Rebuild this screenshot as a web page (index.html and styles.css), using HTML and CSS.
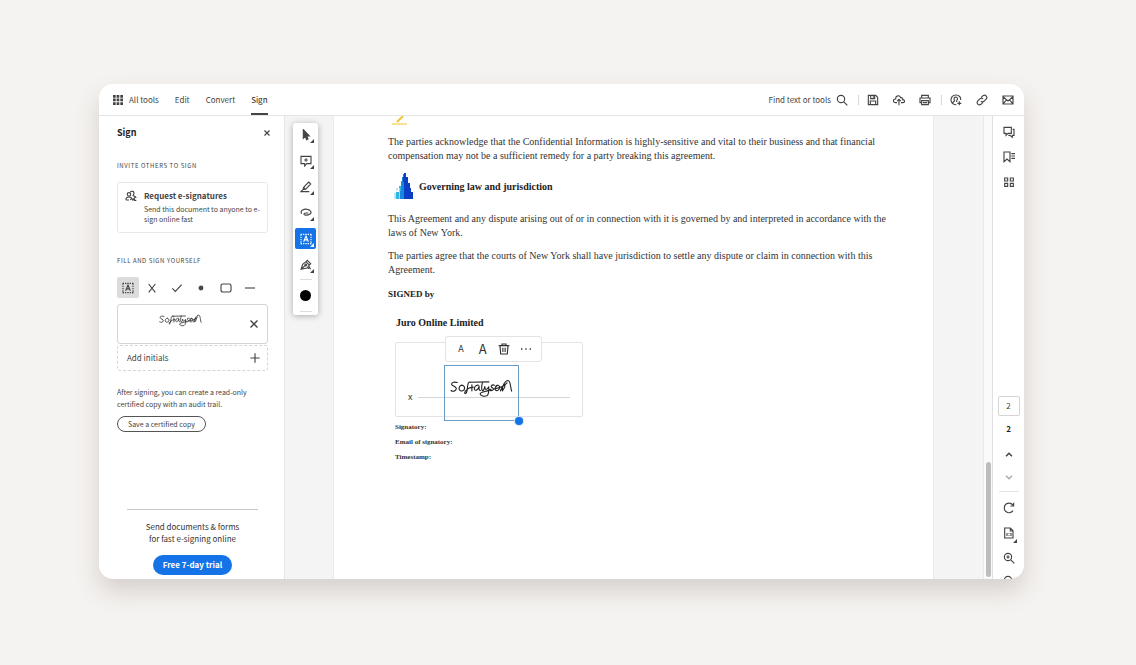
FILE: index.html
```html
<!DOCTYPE html>
<html lang="en">
<head>
    <meta charset="UTF-8">
    <meta name="viewport" content="width=device-width, initial-scale=1.0">
    <title>Sign</title>
    <link rel="stylesheet" href="styles.css">
</head>
<body>
    <!-- shared drawings -->
    <svg class="defs" width="0" height="0" aria-hidden="true">
        <symbol id="signature" viewBox="0 0 190 56">
            <path d="M22 10C14 7 4 9 5 16C8 22 20 22 19 29C17 37 8 38 3 34M37 18C29 18 25 27 29 33C34 38 44 35 44 27C44 22 41 19 37 18M64 9C56 6 54 12 53 22C52 34 50 45 45 43C42 38 52 29 60 26L70 24M66 17L66 35M86 18C77 16 72 26 74 31C77 37 86 31 88 21C87 29 88 35 92 34M98 8C96 17 94 29 97 33C99 37 103 32 105 22C105 31 109 36 117 23C117 34 118 47 111 50C103 53 92 50 91 44C91 38 108 39 124 30M60 9L117 8M134 18C126 15 121 22 127 25C135 29 130 36 121 34M144 18C136 18 134 30 139 34C146 36 151 28 149 22C147 17 142 16 138 24M152 35C157 28 158 17 165 16C168 20 161 32 158 35C156 22 166 4 175 4C183 5 181 20 186 36M132 30C146 26 160 25 172 11"/>
        </symbol>
        <symbol id="text-field" viewBox="0 0 18 18">
            <path d="M1 2H17M1 16H17" stroke-dasharray="2 1.5"/>
            <path d="M1.5 2V17M16.5 2V17" stroke-dasharray="2 1.5"/>
            <path d="M5.5 13L9 4.5L12.5 13M6.8 10.4H11.2"/>
        </symbol>
    </svg>

    <main class="window">
        <header class="topbar">
            <nav class="tabs">
                <a href="#" class="tab">
                    <svg class="grid-icon" viewBox="0 0 10 10"><path d="M0 0H2.7V2.7H0ZM3.6 0H6.3V2.7H3.6ZM7.3 0H10V2.7H7.3ZM0 3.6H2.7V6.3H0ZM3.6 3.6H6.3V6.3H3.6ZM7.3 3.6H10V6.3H7.3ZM0 7.3H2.7V10H0ZM3.6 7.3H6.3V10H3.6ZM7.3 7.3H10V10H7.3Z"/></svg>
                    All tools
                </a>
                <a href="#" class="tab">Edit</a>
                <a href="#" class="tab">Convert</a>
                <a href="#" class="tab active">Sign</a>
            </nav>
            <div class="actions">
                <button class="find">Find text or tools
                    <svg class="icon" viewBox="0 0 18 18"><circle cx="7.5" cy="7.5" r="5.5"/><path d="M11.7 11.7L17 17"/></svg>
                </button>
                <span class="sep"></span>
                <button class="action" aria-label="Save"><svg class="icon" viewBox="0 0 18 18"><path d="M2 2H13L16 5V16H2ZM5.5 2V7H11.5V2M9.5 3.5V5.5M5 16V10.5H13V16"/></svg></button>
                <button class="action" aria-label="Upload"><svg class="icon" viewBox="0 0 18 18"><path d="M6 13H4C-.5 13 -.5 7.5 4 7.5C3.5 2 10 1 11.5 5.5C14.5 5 15 8 14.5 8.5C18.5 9 18 13 14.5 13H12M9 17V8M6.2 10.8L9 8L11.8 10.8"/></svg></button>
                <button class="action" aria-label="Print"><svg class="icon" viewBox="0 0 18 18"><path d="M4 6V2H14V6M4 13H1.5V6H16.5V13H14M4 10H14V16H4ZM6 13H12"/></svg></button>
                <span class="sep"></span>
                <button class="action" aria-label="Share with people"><svg class="icon" viewBox="0 0 18 18"><path d="M9.5 16C-1 17 -1 1.5 8.5 1.5C14 1.5 16.5 5 16 9M4 14C4.5 11 7 11 7 10C4.5 6 7 4.5 9 4.5C12 5 11.5 8 10 10L10 12M14 11V17M11 14H17"/></svg></button>
                <button class="action" aria-label="Copy link"><svg class="icon" viewBox="0 0 18 18"><path d="M7.5 5.5L10.5 2.5C13.5 0 18 4 15.5 7.5L12 11C10.5 12 8.5 12 7.5 10.5M10.5 12.5L7.5 15.5C4 18 0 14 2.5 10.5L6 7C7.5 6 9.5 6 10.5 7.5"/></svg></button>
                <button class="action" aria-label="Email"><svg class="icon" viewBox="0 0 18 18"><path d="M1.5 3H16.5V15H1.5ZM2 4.5L9 10.5L16 4.5M2 14.5L6.5 9M16 14.5L11.5 9"/></svg></button>
            </div>
        </header>

        <div class="workspace">
            <aside class="sidebar">
                <div class="sidebar-head">
                    <h1>Sign</h1>
                    <button class="close" aria-label="Close"><svg viewBox="0 0 8 8"><path d="M1.5 1.5L6.5 6.5M6.5 1.5L1.5 6.5"/></svg></button>
                </div>

                <h2 class="invite">Invite others to sign</h2>
                <button class="request">
                    <svg class="icon" viewBox="0 0 18 18"><circle cx="6" cy="6.5" r="2.6"/><path d="M8 3.5C9 1 14 1.5 13.5 5C13.5 6.5 12 8 12 8.5C14 9 16.5 9.5 16.5 12M1.5 15C1 11 4 10.5 6 10.5C8 10.5 9 11 9.5 12M1.5 15H6M8 15L10 12.5L11.5 15L14 12V15.5H17"/></svg>
                    <span>
                        <strong>Request e-signatures</strong>
                        <small>Send this document to anyone to e-sign online fast</small>
                    </span>
                </button>

                <h2 class="fill">Fill and sign yourself</h2>
                <div class="marks">
                    <button class="mark selected" aria-label="Text"><svg class="icon"><use href="#text-field"/></svg></button>
                    <button class="mark" aria-label="Cross"><svg class="icon" viewBox="0 0 18 18"><path d="M4 3L14 15.5M14 3L4 15.5"/></svg></button>
                    <button class="mark" aria-label="Check"><svg class="icon" viewBox="0 0 18 18"><path d="M2 9.5L6.5 14L16 4"/></svg></button>
                    <button class="mark" aria-label="Dot"><svg class="icon" viewBox="0 0 18 18"><circle class="solid" cx="9" cy="9" r="2.8"/></svg></button>
                    <button class="mark" aria-label="Box"><svg class="icon" viewBox="0 0 18 18"><rect x="1.5" y="3" width="15" height="12" rx="2.5"/></svg></button>
                    <button class="mark" aria-label="Line"><svg class="icon" viewBox="0 0 18 18"><path d="M1.5 9H16.5"/></svg></button>
                </div>
                <div class="saved-signature">
                    <svg class="signature small"><use href="#signature"/></svg>
                    <button class="close" aria-label="Remove signature"><svg viewBox="0 0 8 8"><path d="M.5 .5L7.5 7.5M7.5 .5L.5 7.5"/></svg></button>
                </div>
                <button class="initials">Add initials
                    <svg class="icon" viewBox="0 0 18 18"><path d="M9 2V16M2 9H16"/></svg>
                </button>

                <p class="note">After signing, you can create a read-only certified copy with an audit trail.</p>
                <button class="certify">Save a certified copy</button>

                <div class="promo">
                    <p>Send documents &amp; forms<br>for fast e-signing online</p>
                    <button class="trial">Free 7-day trial</button>
                </div>
            </aside>

            <section class="viewer">
                <div class="tools">
                    <button class="tool" aria-label="Select"><svg class="icon" viewBox="0 0 18 18"><path class="solid" d="M5 1V14L8 11.3L10 16L12 15L10 10.5H14Z"/></svg></button>
                    <button class="tool" aria-label="Comment"><svg class="icon" viewBox="0 0 18 18"><path d="M1.5 2H16.5V13H10L7 16.5V13H1.5ZM9 4.8V10.2M6.3 7.5H11.7"/></svg></button>
                    <button class="tool" aria-label="Highlight"><svg class="icon" viewBox="0 0 18 18"><path d="M13 1.5L16 4.5L8.5 12.5L4.5 13L5.5 9.5ZM5.5 9.5L8.5 12.5M4.5 13L1.5 16H14"/></svg></button>
                    <button class="tool" aria-label="Draw"><svg class="icon" viewBox="0 0 18 18"><path d="M2.5 10C-1 5 7 2.5 11 3.5C17 4.5 18 9 14.5 11C11 13 5 12.5 6 10C6.5 8.5 9 9 12.5 9"/></svg></button>
                    <button class="tool current" aria-label="Add text"><svg class="icon"><use href="#text-field"/></svg></button>
                    <button class="tool" aria-label="Sign"><svg class="icon" viewBox="0 0 18 18"><path d="M1.5 15.5L4 8L9 4L14 9L10.5 13.5ZM2 15L8 9.5M9 4L11 2L16 7L14 9M12 15L14 12L16 15.5"/><circle cx="8.7" cy="9" r="1.3"/></svg></button>
                    <span class="rule"></span>
                    <button class="color" aria-label="Colour"></button>
                    <span class="rule"></span>
                </div>

                <article class="page">
                    <svg class="pen" viewBox="0 0 18 9"><path d="M6 6L12 0" stroke-width="2"/><path d="M1 8H16"/></svg>
                    <p>The parties acknowledge that the Confidential Information is highly-sensitive and vital to their business and that financial compensation may not be a sufficient remedy for a party breaking this agreement.</p>
                    <h3 class="law">
                        <svg viewBox="0 0 20 27">
                            <path fill="#bdeaf5" d="M0 20H2V26H0ZM2 15H4V18H2Z"/>
                            <path fill="#2fb4e8" d="M2 19H5V13H7V8H9V26H2Z"/>
                            <path fill="#1687dc" d="M7 9H8V4H9V1H11V26H6V18H7Z"/>
                            <path fill="#0a3ec4" d="M9 4H10V0H12V4H14V10H16V15H17V19H19V26H10V9H9Z"/>
                            <path fill="#8adff2" d="M5 15H6V26H5Z"/>
                        </svg>
                        Governing law and jurisdiction
                    </h3>
                    <p class="governed">This Agreement and any dispute arising out of or in connection with it is governed by and interpreted in accordance with the laws of New York.</p>
                    <p class="courts">The parties agree that the courts of New York shall have jurisdiction to settle any dispute or claim in connection with this Agreement.</p>
                    <h3 class="signed">SIGNED by</h3>

                    <div class="signer">
                        <h4>Juro Online Limited</h4>
                        <div class="sign-box">
                            <span class="cross">x</span>
                            <span class="line"></span>
                            <div class="selection">
                                <svg class="signature"><use href="#signature"/></svg>
                                <span class="handle"></span>
                            </div>
                            <div class="popup">
                                <button class="smaller" aria-label="Smaller">A</button>
                                <button class="larger" aria-label="Larger">A</button>
                                <button aria-label="Delete"><svg class="icon" viewBox="0 0 18 18"><path d="M1 4H17M6 4V1.5H12V4M3 4L4 16.5H14L15 4M7.3 7V13.5M10.7 7V13.5"/></svg></button>
                                <button aria-label="More"><svg class="icon" viewBox="0 0 18 18"><path class="dots" d="M1.5 8h2v2h-2zM8 8h2v2h-2zM14.5 8h2v2h-2z"/></svg></button>
                            </div>
                        </div>
                        <ul>
                            <li>Signatory:</li>
                            <li>Email of signatory:</li>
                            <li>Timestamp:</li>
                        </ul>
                    </div>
                </article>
            </section>

            <div class="scrollbar"><span class="thumb"></span></div>

            <aside class="rail">
                <button class="rail-button" aria-label="Comments"><svg class="icon" viewBox="0 0 18 18"><path d="M1.5 2H12.5V11H7.5L4.5 14V11H1.5ZM14.5 5H16.5V14H14V17L10.5 14H8"/></svg></button>
                <button class="rail-button" aria-label="Bookmarks"><svg class="icon" viewBox="0 0 18 18"><path d="M1.5 1.5H10.5V16L6 12L1.5 16ZM12.5 4H18M12.5 7.5H18M12.5 11H18"/></svg></button>
                <button class="rail-button" aria-label="Pages"><svg class="icon" viewBox="0 0 18 18"><path d="M2.5 3H7V7.5H2.5ZM11 3H15.5V7.5H11ZM2.5 11H7V15.5H2.5ZM11 11H15.5V15.5H11Z"/></svg></button>
                <div class="pager">
                    <input type="text" value="2" aria-label="Page number">
                    <span class="total">2</span>
                    <button class="step" aria-label="Previous page"><svg class="icon" viewBox="0 0 18 18"><path class="heavy" d="M4.5 11L9 6.5L13.5 11"/></svg></button>
                    <button class="step disabled" aria-label="Next page"><svg class="icon" viewBox="0 0 18 18"><path class="heavy" d="M4.5 7L9 11.5L13.5 7"/></svg></button>
                    <span class="rule"></span>
                    <button class="rail-button" aria-label="Rotate"><svg class="icon" viewBox="0 0 18 18"><path d="M15 4.5C10 -1 2 2 2 9C2 16 11 18.5 15 13M16 1V6H11"/></svg></button>
                    <button class="rail-button corner" aria-label="Page display"><svg class="icon" viewBox="0 0 18 18"><path d="M2.5 1.5H11L15 5.5V16.5H2.5ZM11 1.5V6H15M6 9V13.5M12 9V13.5M9 9.5V10.5M9 12V13"/></svg></button>
                    <button class="rail-button" aria-label="Zoom in"><svg class="icon" viewBox="0 0 18 18"><circle cx="7.5" cy="7.5" r="5.5"/><path d="M11.7 11.7L17 17M7.5 5V10M5 7.5H10"/></svg></button>
                    <button class="rail-button last" aria-label="Zoom out"><svg class="icon" viewBox="0 0 18 18"><circle cx="7.5" cy="7.5" r="5.5"/><path d="M11.7 11.7L17 17M5 7.5H10"/></svg></button>
                </div>
            </aside>
        </div>
    </main>
</body>
</html>
```
FILE: styles.css
```css
* {
    box-sizing: border-box;
}
body {
    display: flex;
    height: 100vh;
    margin: 0;
    padding: 84px 112px 86px 99px;
    background-color: #f5f3f1;
    color: #444;
    font-family: "Noto Sans CJK SC", "Noto Sans", sans-serif;
    font-size: 8px;
    line-height: 12px;
}
h1, h2, h3, h4, p, ul {
    margin: 0;
    padding: 0;
}
button {
    padding: 0;
    border: none;
    background: none;
    color: inherit;
    font: inherit;
    cursor: pointer;
}
svg {
    display: block;
    fill: none;
    stroke: currentColor;
}
.defs {
    position: absolute;
}
.icon {
    width: 12px;
    height: 12px;
    flex: none;
    stroke-width: 1.7;
}
.solid {
    fill: currentColor;
}
.dots {
    fill: currentColor;
    stroke: none;
}
.heavy {
    stroke-width: 2.2;
}
.window {
    flex: 1;
    min-width: 0;
    display: flex;
    flex-direction: column;
    overflow: hidden;
    border-radius: 14px;
    background-color: #fff;
    box-shadow: 0 12px 24px rgba(90, 70, 55, 0.2);
}

/* top bar */
.topbar {
    display: flex;
    justify-content: space-between;
    height: 32px;
    flex: none;
    padding: 0 10px 0 14px;
    border-bottom: 1px solid #e6e6e6;
}
.tabs, .actions {
    display: flex;
    align-items: center;
}
.tabs {
    gap: 16px;
}
.tab {
    display: flex;
    align-items: center;
    gap: 6px;
    height: 31px;
    padding-top: 2px;
    border-bottom: 2px solid transparent;
    color: #444;
    text-decoration: none;
}
.tab.active {
    border-color: #444;
    color: #222;
}
.grid-icon {
    width: 10px;
    height: 10px;
    fill: #444;
    stroke: none;
}
.find {
    display: flex;
    align-items: center;
    gap: 5px;
}
.action {
    display: grid;
    place-items: center;
    width: 12px;
    height: 24px;
    margin-left: 14px;
}
.sep {
    width: 1px;
    height: 10px;
    margin-left: 10px;
    background-color: #d8d8d8;
}
.sep + .action {
    margin-left: 8px;
}

.workspace {
    flex: 1;
    min-height: 0;
    display: flex;
}

/* left panel */
.sidebar {
    display: flex;
    flex-direction: column;
    width: 186px;
    flex: none;
    padding: 10px 16px 4px 18px;
    border-right: 1px solid #e4e4e4;
}
.sidebar-head {
    display: flex;
    justify-content: space-between;
    align-items: center;
    height: 14px;
    margin-right: -3px;
}
.sidebar h1 {
    color: #222;
    font-size: 9px;
    line-height: 14px;
}
.close svg {
    width: 8px;
    height: 8px;
    stroke-width: 1.2;
}
.sidebar h2 {
    font-size: 6px;
    font-weight: 400;
    line-height: 10px;
    letter-spacing: 0.1em;
    text-transform: uppercase;
}
.invite {
    margin-top: 21px;
}
.request {
    display: flex;
    gap: 7px;
    margin-top: 11px;
    padding: 7px;
    border: 1px solid #e8e8e8;
    border-radius: 3px;
    text-align: left;
}
.request strong, .request small {
    display: block;
}
.request strong {
    line-height: 12px;
}
.request small {
    margin-top: 2px;
    padding-bottom: 1px;
    font-size: 7px;
    line-height: 10px;
}
.fill {
    margin-top: 23px;
}
.marks {
    display: flex;
    justify-content: space-between;
    margin-top: 11px;
    padding-right: 7px;
}
.mark {
    display: grid;
    place-items: center;
    width: 22px;
    height: 21px;
    border-radius: 2px;
}
.mark.selected {
    background-color: #dcdcdc;
}
.saved-signature {
    display: flex;
    justify-content: space-between;
    align-items: center;
    height: 40px;
    margin-top: 6px;
    padding: 0 9px 0 41px;
    border: 1px solid #d5d5d5;
    border-radius: 3px;
}
.saved-signature .close svg {
    stroke-width: 1.4;
}
.signature {
    width: 63px;
    height: 19px;
    color: #222;
    stroke-width: 3.4;
    stroke-linecap: round;
    stroke-linejoin: round;
}
.signature.small {
    width: 43px;
    height: 13px;
    margin-bottom: 8px;
}
.initials {
    display: flex;
    justify-content: space-between;
    align-items: center;
    height: 26px;
    margin-top: 1px;
    padding: 0 6px 0 9px;
    border: 1px dashed #d5d5d5;
    border-radius: 3px;
}
.note {
    margin-top: 15px;
    font-size: 7px;
}
.certify {
    align-self: flex-start;
    height: 16px;
    margin-top: 6px;
    padding: 0 10px;
    border: 1px solid #555;
    border-radius: 8px;
    font-size: 7px;
    line-height: 12px;
}
.promo {
    display: flex;
    flex-direction: column;
    align-items: center;
    gap: 10px;
    margin: auto 10px 0;
    padding-top: 11px;
    border-top: 1px solid #c8c8c8;
    color: #333;
    text-align: center;
}
.trial {
    height: 20px;
    padding: 0 10px;
    border-radius: 10px;
    background-color: #1473e6;
    color: #fff;
    font-weight: 700;
}

/* document */
.viewer {
    flex: 1;
    min-width: 0;
    display: flex;
    align-items: flex-start;
    padding: 0 50px 0 8px;
    overflow: hidden;
    background-color: #f4f4f4;
}
.tools {
    display: flex;
    flex-direction: column;
    align-items: center;
    width: 25px;
    flex: none;
    margin: 7px 16px 0 0;
    padding-bottom: 3px;
    border-radius: 3px;
    background-color: #fff;
    box-shadow: 0 1px 6px rgba(0, 0, 0, 0.3);
}
.tool {
    position: relative;
    display: grid;
    place-items: center;
    width: 21px;
    height: 21px;
    margin-top: 5px;
    border-radius: 2px;
}
.tool:first-child {
    margin-top: 1px;
}
.tool.current {
    background-color: #1473e6;
    color: #fff;
}
.tool::after, .corner::after {
    content: "";
    position: absolute;
    right: 2px;
    bottom: 2px;
    border: 2px solid transparent;
    border-right-color: currentColor;
    border-bottom-color: currentColor;
}
.tools .rule {
    width: 12px;
    height: 1px;
    margin-top: 4px;
    background-color: #ddd;
}
.color {
    width: 11px;
    height: 11px;
    margin-top: 10px;
    border-radius: 50%;
    background-color: #000;
}
.color + .rule {
    margin-top: 10px;
}
.page {
    flex: 1;
    min-width: 0;
    align-self: stretch;
    padding: 0 35px 0 54px;
    background-color: #fff;
    outline: 1px solid #ebebeb;
    color: #333;
    font-family: "Liberation Serif", serif;
    font-size: 10px;
    line-height: 14px;
}
.pen {
    width: 18px;
    height: 9px;
    margin: 0 0 10px 3px;
    color: #f4c430;
}
.page h3, .page h4 {
    color: #222;
    font-size: 10px;
    line-height: 14px;
}
.law {
    display: flex;
    align-items: center;
    gap: 5px;
    margin: 10px 0 12px 6px;
}
.law svg {
    width: 20px;
    height: 27px;
    stroke: none;
}
.courts {
    margin-top: 9px;
}
.page .signed {
    margin-top: 10px;
    font-size: 9px;
}
.signer {
    margin: 15px 0 0 7px;
}
.signer h4 {
    margin-left: 1px;
}
.sign-box {
    position: relative;
    display: flex;
    align-items: center;
    gap: 6px;
    width: 188px;
    height: 75px;
    margin-top: 12px;
    padding: 35px 12px 0;
    border: 1px solid #e3e3e3;
    border-radius: 2px;
}
.cross {
    font-family: "Noto Sans CJK SC", sans-serif;
    font-size: 9px;
}
.line {
    flex: 1;
    height: 1px;
    background-color: #cfd6dc;
}
.selection {
    position: absolute;
    left: 48px;
    top: 22px;
    width: 75px;
    height: 56px;
    padding: 13px 5px;
    border: 1px solid #6a9bc9;
}
.handle {
    position: absolute;
    right: -5px;
    bottom: -5px;
    width: 8px;
    height: 8px;
    border-radius: 50%;
    background-color: #1473e6;
    box-shadow: 0 0 0 1px #cfe1f7;
}
.popup {
    position: absolute;
    left: 49px;
    top: -7px;
    display: flex;
    align-items: center;
    justify-content: space-around;
    width: 97px;
    height: 26px;
    padding: 0 4px;
    border: 1px solid #e3e3e3;
    border-radius: 3px;
    background-color: #fff;
    font-family: "Noto Sans CJK SC", sans-serif;
}
.popup button {
    width: 12px;
}
.popup .smaller {
    font-size: 9px;
}
.popup .larger {
    font-size: 13px;
}
.signer ul {
    margin-top: 3px;
    font-size: 7px;
    font-weight: 700;
    line-height: 15px;
    list-style: none;
}

/* scrollbar and right rail */
.scrollbar {
    display: flex;
    align-items: flex-end;
    justify-content: center;
    width: 10px;
    flex: none;
    padding-bottom: 2px;
    border-left: 1px solid #e8e8e8;
    border-right: 1px solid #e0e0e0;
    background-color: #fafafa;
}
.thumb {
    width: 5px;
    height: 25%;
    border-radius: 3px;
    background-color: #bdbdbd;
}
.rail {
    display: flex;
    flex-direction: column;
    align-items: center;
    width: 31px;
    flex: none;
    padding-top: 3px;
}
.rail-button {
    position: relative;
    display: grid;
    place-items: center;
    width: 21px;
    height: 25px;
    flex: none;
}
.pager {
    display: flex;
    flex-direction: column;
    align-items: center;
    margin: auto 0 -14px;
}
.pager input {
    width: 22px;
    height: 20px;
    padding: 0 0 2px;
    border: 1px solid #d5d5d5;
    border-radius: 2px;
    background-color: #fff;
    color: #444;
    font: inherit;
    text-align: center;
}
.total {
    margin: 7px 0 9px;
    color: #222;
    font-weight: 700;
}
.step {
    display: grid;
    place-items: center;
    height: 22px;
}
.step.disabled {
    color: #aaa;
}
.pager .rule {
    width: 20px;
    height: 1px;
    margin: 3px 0;
    background-color: #e3e3e3;
}
.pager .last {
    margin-top: -2px;
}
```
